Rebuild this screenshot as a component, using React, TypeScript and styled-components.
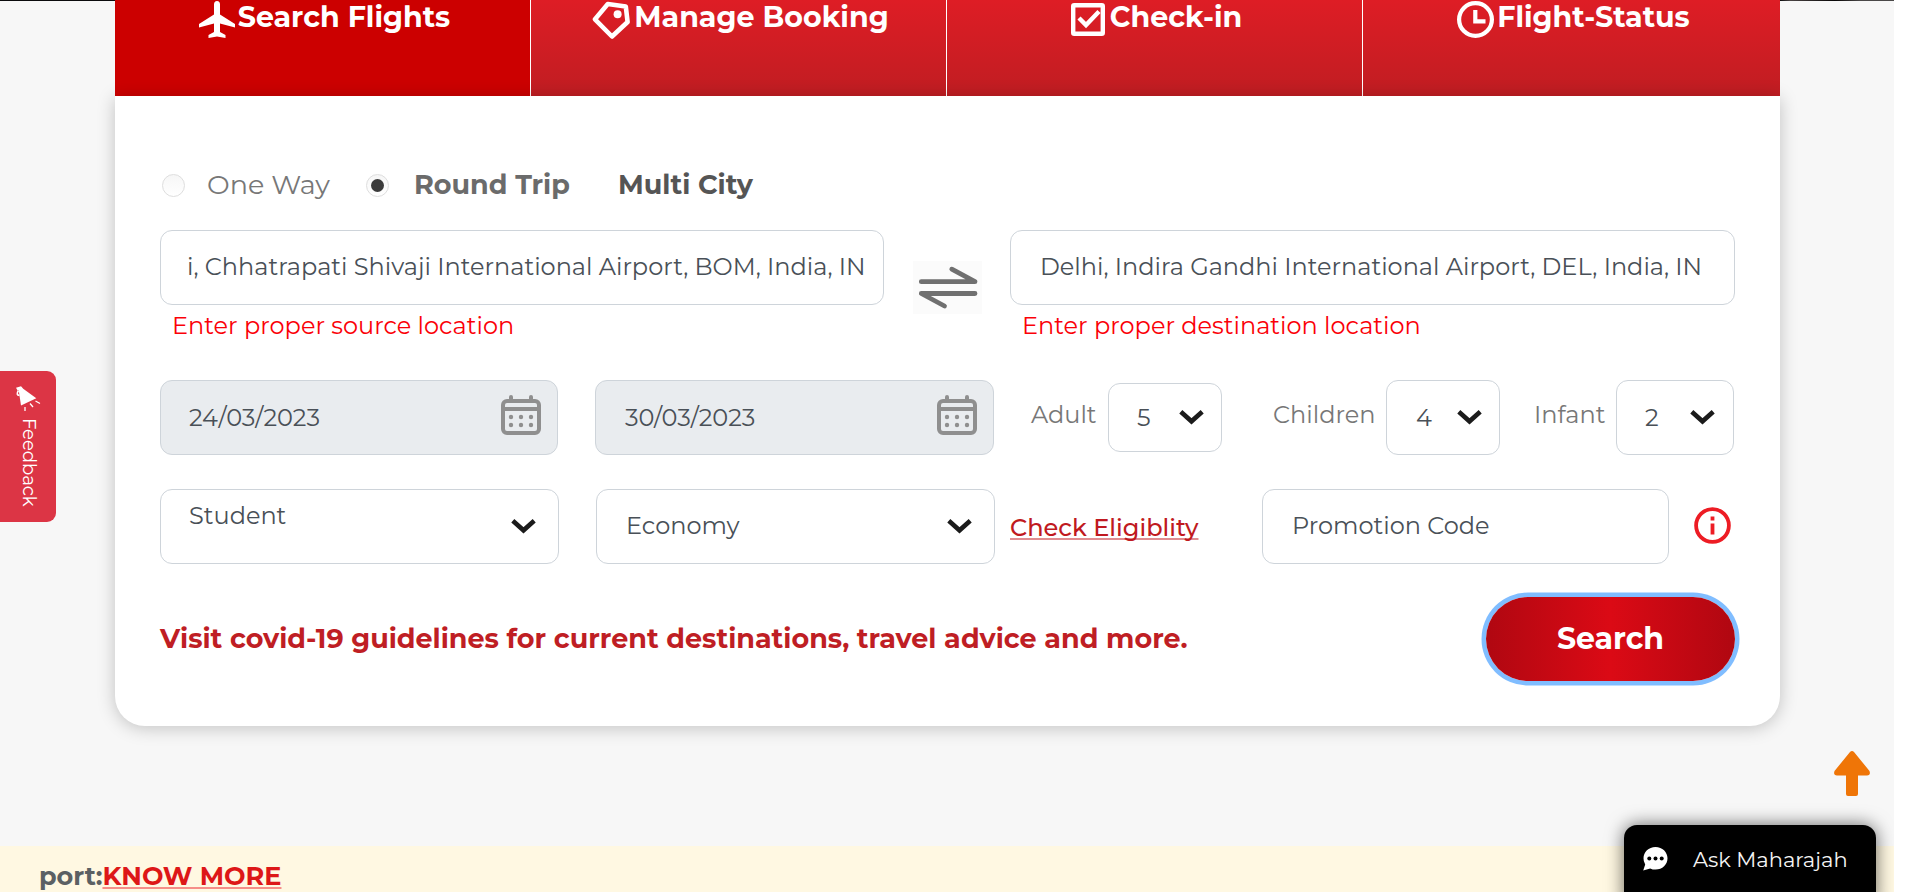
import React from "react";
import styled, { createGlobalStyle } from "styled-components";

const GlobalStyle = createGlobalStyle`
  *, *::before, *::after { box-sizing: border-box; }
  body {
    margin: 0;
    background: #fff;
    font-family: "Montserrat", "Inter", "Liberation Sans", sans-serif;
    overflow: hidden;
  }
  button, input { font-family: inherit; }
`;

const Page = styled.div`
  position: relative;
  display: flex;
  flex-direction: column;
  width: 1894px;
  height: 892px;
  background: #f7f7f7;
  overflow: hidden;
`;

const HeroEdge = styled.div`
  height: 1px;
  background: linear-gradient(90deg, #0b0b0d 0 1780px, #4a4444 1790px, #080606 1835px, #4a4848 1860px);
`;

const Booking = styled.main`
  width: 1665px;
  margin: -1px 0 0 115px;
`;

const Tabs = styled.nav`
  display: grid;
  grid-template-columns: repeat(3, 416px) 1fr;
  height: 96px;
`;

const Tab = styled.button<{ $active?: boolean }>`
  display: flex;
  align-items: flex-start;
  justify-content: center;
  padding: 0 0 0 4px;
  border: 0;
  border-right: 1px solid #fff;
  background: ${(p) => (p.$active ? "#cc0000" : "linear-gradient(#de1d25, #c01d22)")};
  color: #fff;
  &:last-child { border-right: 0; }
`;

const TabIcon = styled.svg<{ $gap: number; $top: number }>`
  flex: none;
  margin: ${(p) => p.$top}px ${(p) => p.$gap}px 0 0;
`;

const TabLabel = styled.span`
  font-size: 28.5px;
  font-weight: 700;
  line-height: 34px;
  white-space: nowrap;
`;

const Card = styled.section`
  position: relative;
  height: 630px;
  padding: 69px 45px 0;
  background: #fff;
  border-radius: 0 0 30px 30px;
  box-shadow: 0 2px 18px rgba(0, 0, 0, 0.22);
`;

const TripRow = styled.div`
  display: flex;
  align-items: center;
  height: 40px;
  padding-left: 2px;
`;

const Radio = styled.span<{ $on?: boolean }>`
  display: grid;
  place-items: center;
  width: 23px;
  height: 23px;
  border: 1.5px solid #dedede;
  border-radius: 50%;
  background: linear-gradient(#f6f6f6, #fff);
  &::after {
    content: "";
    width: 13px;
    height: 13px;
    border-radius: 50%;
    background: ${(p) => (p.$on ? "#3b3b3b" : "transparent")};
  }
`;

const TripLabel = styled.span<{ $bold?: boolean; $color: string; $w: number; $ml: number }>`
  width: ${(p) => p.$w}px;
  margin-left: ${(p) => p.$ml}px;
  color: ${(p) => p.$color};
  font-size: 27px;
  line-height: 34px;
  padding-bottom: 1px;
  font-weight: ${(p) => (p.$bold ? 700 : 400)};
  white-space: nowrap;
`;

const RouteRow = styled.div`
  display: grid;
  grid-template-columns: 724px 69px 725px;
  justify-content: space-between;
  align-items: start;
  height: 150px;
  margin-top: 25px;
`;

const Field = styled.div<{ $w?: number; $h?: number; $filled?: boolean; $pl: number; $pr?: number }>`
  display: flex;
  flex: none;
  align-items: center;
  justify-content: space-between;
  width: ${(p) => (p.$w ? p.$w + "px" : "100%")};
  height: ${(p) => p.$h ?? 75}px;
  padding: 0 ${(p) => p.$pr ?? 0}px 0 ${(p) => p.$pl}px;
  border: 1px solid #ced4da;
  border-radius: 12px;
  background: ${(p) => (p.$filled ? "#e9ecef" : "#fff")};
`;

const Value = styled.span<{ $raise?: number }>`
  padding-bottom: ${(p) => p.$raise ?? 0}px;
  color: #495057;
  font-size: 24px;
  line-height: 30px;
  white-space: nowrap;
`;

const ErrorText = styled.p`
  margin: 6px 0 0 12px;
  color: #fb0007;
  font-size: 24px;
  line-height: 30px;
  white-space: nowrap;
`;

const Swap = styled.button`
  width: 69px;
  height: 53px;
  margin-top: 31px;
  padding: 0;
  border: 0;
  background: #fbfbfb;
  svg { display: block; }
`;

const Row = styled.div<{ $mt?: number }>`
  display: flex;
  align-items: center;
  height: 75px;
  margin-top: ${(p) => p.$mt ?? 0}px;
`;

const Spacer = styled.span<{ $w: number }>`
  flex: none;
  width: ${(p) => p.$w}px;
`;

const CountLabel = styled.label<{ $w: number }>`
  flex: none;
  width: ${(p) => p.$w}px;
  padding-bottom: 6px;
  color: #777;
  font-size: 24px;
  line-height: 30px;
  white-space: nowrap;
`;

const EligibilityLink = styled.a`
  flex: none;
  width: 252px;
  margin: 2px 0 0 15px;
  color: #c01920;
  font-size: 24.1px;
  font-weight: 500;
  line-height: 30px;
  text-decoration: underline 2px #e08c90;
  text-underline-offset: 2px;
  text-decoration-skip-ink: none;
  white-space: nowrap;
`;

const Footer = styled.div`
  display: flex;
  align-items: center;
  justify-content: space-between;
  margin-top: 33px;
`;

const Advice = styled.a`
  padding-bottom: 1px;
  color: #bf1e24;
  font-size: 27px;
  font-weight: 700;
  white-space: nowrap;
`;

const SearchButton = styled.button`
  width: 249px;
  height: 84px;
  padding: 0 0 2px;
  border: 0;
  border-radius: 42px;
  background: linear-gradient(90deg, #b00711, #db0a15 50%, #b00711);
  box-shadow: 0 0 0 4.5px #80bdff;
  color: #fff;
  font-size: 30px;
  font-weight: 700;
`;

const Notice = styled.div`
  display: flex;
  align-items: flex-start;
  height: 46px;
  margin-top: auto;
  padding: 14px 0 0 39px;
  background: #fff8e2;
  font-size: 25.5px;
  font-weight: 700;
  line-height: 32px;
`;

const NoticeText = styled.span`
  color: #5b6063;
`;

const NoticeLink = styled.a`
  color: #dd1717;
  text-decoration: underline 2px #f68e88;
  text-underline-offset: 2px;
`;

const Feedback = styled.button`
  position: absolute;
  left: 0;
  top: 371px;
  display: flex;
  flex-direction: column;
  align-items: flex-start;
  width: 56px;
  height: 151px;
  padding: 5px 0 0 8px;
  border: 0;
  border-radius: 0 9px 9px 0;
  background: #dc3545;
  color: #fff;
`;

const FeedbackText = styled.span`
  margin: -2px 0 0 7px;
  font-size: 18px;
  line-height: 28px;
  writing-mode: vertical-rl;
`;

const ToTop = styled.button`
  position: absolute;
  left: 1834px;
  top: 751px;
  padding: 0;
  border: 0;
  background: none;
  svg { display: block; }
`;

const Chat = styled.button`
  position: absolute;
  left: 1624px;
  top: 825px;
  display: flex;
  align-items: center;
  width: 252px;
  height: 80px;
  padding: 0 0 12px 19px;
  border: 0;
  border-radius: 13px 13px 0 0;
  background: #000;
  box-shadow: 0 0 18px rgba(0, 0, 0, 0.6);
  color: #f4f4f4;
  font-size: 21px;
  white-space: nowrap;
  svg { flex: none; margin-right: 25px; }
`;

const CalendarSvg = styled.svg`
  flex: none;
  margin-bottom: 5px;
`;

const InfoSvg = styled.svg`
  flex: none;
  margin-bottom: 2px;
`;

const Calendar = () => (
  <CalendarSvg width="40" height="40" viewBox="0 0 40 40" fill="none" stroke="#8f8f8f" strokeWidth="4">
    <rect x="2" y="6" width="36" height="32" rx="4" />
    <path d="M2 14H38" />
    <path d="M10 2V5M30 2V5" strokeLinecap="round" />
    <g fill="#8f8f8f" stroke="none">
      {[10, 20, 30].map((x) => [22, 30].map((y) => <circle key={`${x}-${y}`} cx={x} cy={y} r="2.2" />))}
    </g>
  </CalendarSvg>
);

const Chevron = () => (
  <svg width="25" height="15" viewBox="0 0 25 15" fill="none" stroke="#1b1b1b" strokeWidth="4.6" strokeLinejoin="miter">
    <path d="M1.8 1.8L12.5 11.3L23.2 1.8" />
  </svg>
);

export default function App() {
  return (
    <>
      <GlobalStyle />
      <Page>
        <HeroEdge />
        <Booking>
          <Tabs>
            <Tab $active>
              <TabIcon $gap={3} $top={1} width="36" height="37" viewBox="0 0 36 37" fill="#fff">
                <path d="M18 0C20 0 21 1.500 21 3.500V13.500L36 23V26.500L21 22.500V31L26.500 34V37L18 35.500L9.500 37V34L15 31V22.500L0 26.500V23L15 13.500V3.500C15 1.500 16 0 18 0Z" />
              </TabIcon>
              <TabLabel>Search Flights</TabLabel>
            </Tab>
            <Tab>
              <TabIcon $gap={3} $top={0} width="39" height="40" viewBox="0 0 39 40" fill="none" stroke="#fff" strokeWidth="4.6" strokeLinejoin="round">
                <path d="M3 19.300L15.800 4L33.800 6.500L35.600 22L20 36.500Z" />
                <circle cx="25.600" cy="14.300" r="4" fill="#fff" stroke="none" />
              </TabIcon>
              <TabLabel>Manage Booking</TabLabel>
            </Tab>
            <Tab>
              <TabIcon $gap={5} $top={3} width="34" height="33" viewBox="0 0 34 33" fill="none" stroke="#fff" strokeWidth="4.400">
                <rect x="2.200" y="2.200" width="29.600" height="28.600" rx="1" />
                <path d="M8 15L15 22L28 8.500" />
              </TabIcon>
              <TabLabel>Check-in</TabLabel>
            </Tab>
            <Tab>
              <TabIcon $gap={3} $top={1} width="37" height="37" viewBox="0 0 37 37" fill="none" stroke="#fff" strokeWidth="4.200">
                <circle cx="18.500" cy="18.500" r="16.400" />
                <path d="M18.300 9V20.300H28.500" />
              </TabIcon>
              <TabLabel>Flight-Status</TabLabel>
            </Tab>
          </Tabs>

          <Card>
            <TripRow>
              <Radio />
              <TripLabel $color="#777" $w={136} $ml={22}>One Way</TripLabel>
              <Spacer $w={23} />
              <Radio $on />
              <TripLabel $bold $color="#6b6b6b" $w={204} $ml={25}>Round Trip</TripLabel>
              <TripLabel $bold $color="#555" $w={160} $ml={0}>Multi City</TripLabel>
            </TripRow>

            <RouteRow>
              <div>
                <Field $pl={26}>
                  <Value $raise={2}>i, Chhatrapati Shivaji International Airport, BOM, India, IN</Value>
                </Field>
                <ErrorText>Enter proper source location</ErrorText>
              </div>
              <Swap>
                <svg width="69" height="53" viewBox="0 0 69 53" fill="none" stroke="#707070" strokeWidth="4.800" strokeLinecap="round" strokeLinejoin="round">
                  <path d="M8.300 20.700H62L38.800 8.200" />
                  <path d="M62 32.500H8.300L31.500 45" />
                </svg>
              </Swap>
              <div>
                <Field $pl={29}>
                  <Value $raise={2}>Delhi, Indira Gandhi International Airport, DEL, India, IN</Value>
                </Field>
                <ErrorText>Enter proper destination location</ErrorText>
              </div>
            </RouteRow>

            <Row>
              <Field $w={398} $filled $pl={28} $pr={16}>
                <Value>24/03/2023</Value>
                <Calendar />
              </Field>
              <Spacer $w={37} />
              <Field $w={399} $filled $pl={29} $pr={16}>
                <Value>30/03/2023</Value>
                <Calendar />
              </Field>
              <Spacer $w={37} />
              <CountLabel $w={77}>Adult</CountLabel>
              <Field $w={114} $h={69} $pl={28} $pr={17}>
                <Value>5</Value>
                <Chevron />
              </Field>
              <Spacer $w={51} />
              <CountLabel $w={113}>Children</CountLabel>
              <Field $w={114} $pl={29} $pr={17}>
                <Value>4</Value>
                <Chevron />
              </Field>
              <Spacer $w={34} />
              <CountLabel $w={82}>Infant</CountLabel>
              <Field $w={118} $pl={28} $pr={18}>
                <Value>2</Value>
                <Chevron />
              </Field>
            </Row>

            <Row $mt={34}>
              <Field $w={399} $pl={28} $pr={22}>
                <Value $raise={22}>Student</Value>
                <Chevron />
              </Field>
              <Spacer $w={37} />
              <Field $w={399} $pl={29} $pr={22}>
                <Value $raise={2}>Economy</Value>
                <Chevron />
              </Field>
              <EligibilityLink>Check Eligiblity</EligibilityLink>
              <Field $w={407} $pl={29}>
                <Value $raise={2}>Promotion Code</Value>
              </Field>
              <Spacer $w={25} />
              <InfoSvg width="37" height="37" viewBox="0 0 37 37" fill="none" stroke="#ed1c24" strokeWidth="3.800">
                <circle cx="18.500" cy="18.500" r="16.400" />
                <path d="M18.500 16.500V27.500M18.500 9.500V13.500" />
              </InfoSvg>
            </Row>

            <Footer>
              <Advice>Visit covid-19 guidelines for current destinations, travel advice and more.</Advice>
              <SearchButton>Search</SearchButton>
            </Footer>
          </Card>
        </Booking>

        <Notice>
          <NoticeText>port:</NoticeText>
          <NoticeLink>KNOW MORE</NoticeLink>
        </Notice>

        <Feedback>
          <svg width="44" height="44" viewBox="0 0 44 44" fill="#fff">
            <path d="M10.500 13L13.500 11.500L28.300 22.300L13 29.500Z" />
            <path d="M8 11.800L13 10.300L15 12.500L9.500 14.500Z" />
            <path d="M10.500 14.500Q7.500 19 11.500 19.500" fill="none" stroke="#fff" strokeWidth="1.600" />
            <path d="M17 31V35M22 27.500L25 31M27.500 25L32 27.500" stroke="#fff" strokeWidth="1.300" />
          </svg>
          <FeedbackText>Feedback</FeedbackText>
        </Feedback>

        <ToTop aria-label="Back to top">
          <svg width="36" height="45" viewBox="0 0 36 45" fill="#ef7507">
            <path d="M18 0Q19 0 20 1L35.500 20Q37 24.500 33 24.500H24V43Q24 45 22 45H14Q12 45 12 43V24.500H3Q-1 24.500 .5 20L16 1Q17 0 18 0Z" />
          </svg>
        </ToTop>

        <Chat>
          <svg width="25" height="24" viewBox="0 0 25 24">
            <path d="M12.500 0C19.400 0 24.500 5 24.500 11.300S19.400 22.600 12.500 22.600C10.500 22.600 8.800 22.200 7.200 21.400L.2 23.500L2.200 17.500A11 11 0 0 1 .5 11.300C.5 5 5.600 0 12.500 0Z" fill="#fff" />
            <circle cx="6.300" cy="11.500" r="2" />
            <circle cx="12.500" cy="11.500" r="2" />
            <circle cx="18.700" cy="11.500" r="2" />
          </svg>
          Ask Maharajah
        </Chat>
      </Page>
    </>
  );
}
